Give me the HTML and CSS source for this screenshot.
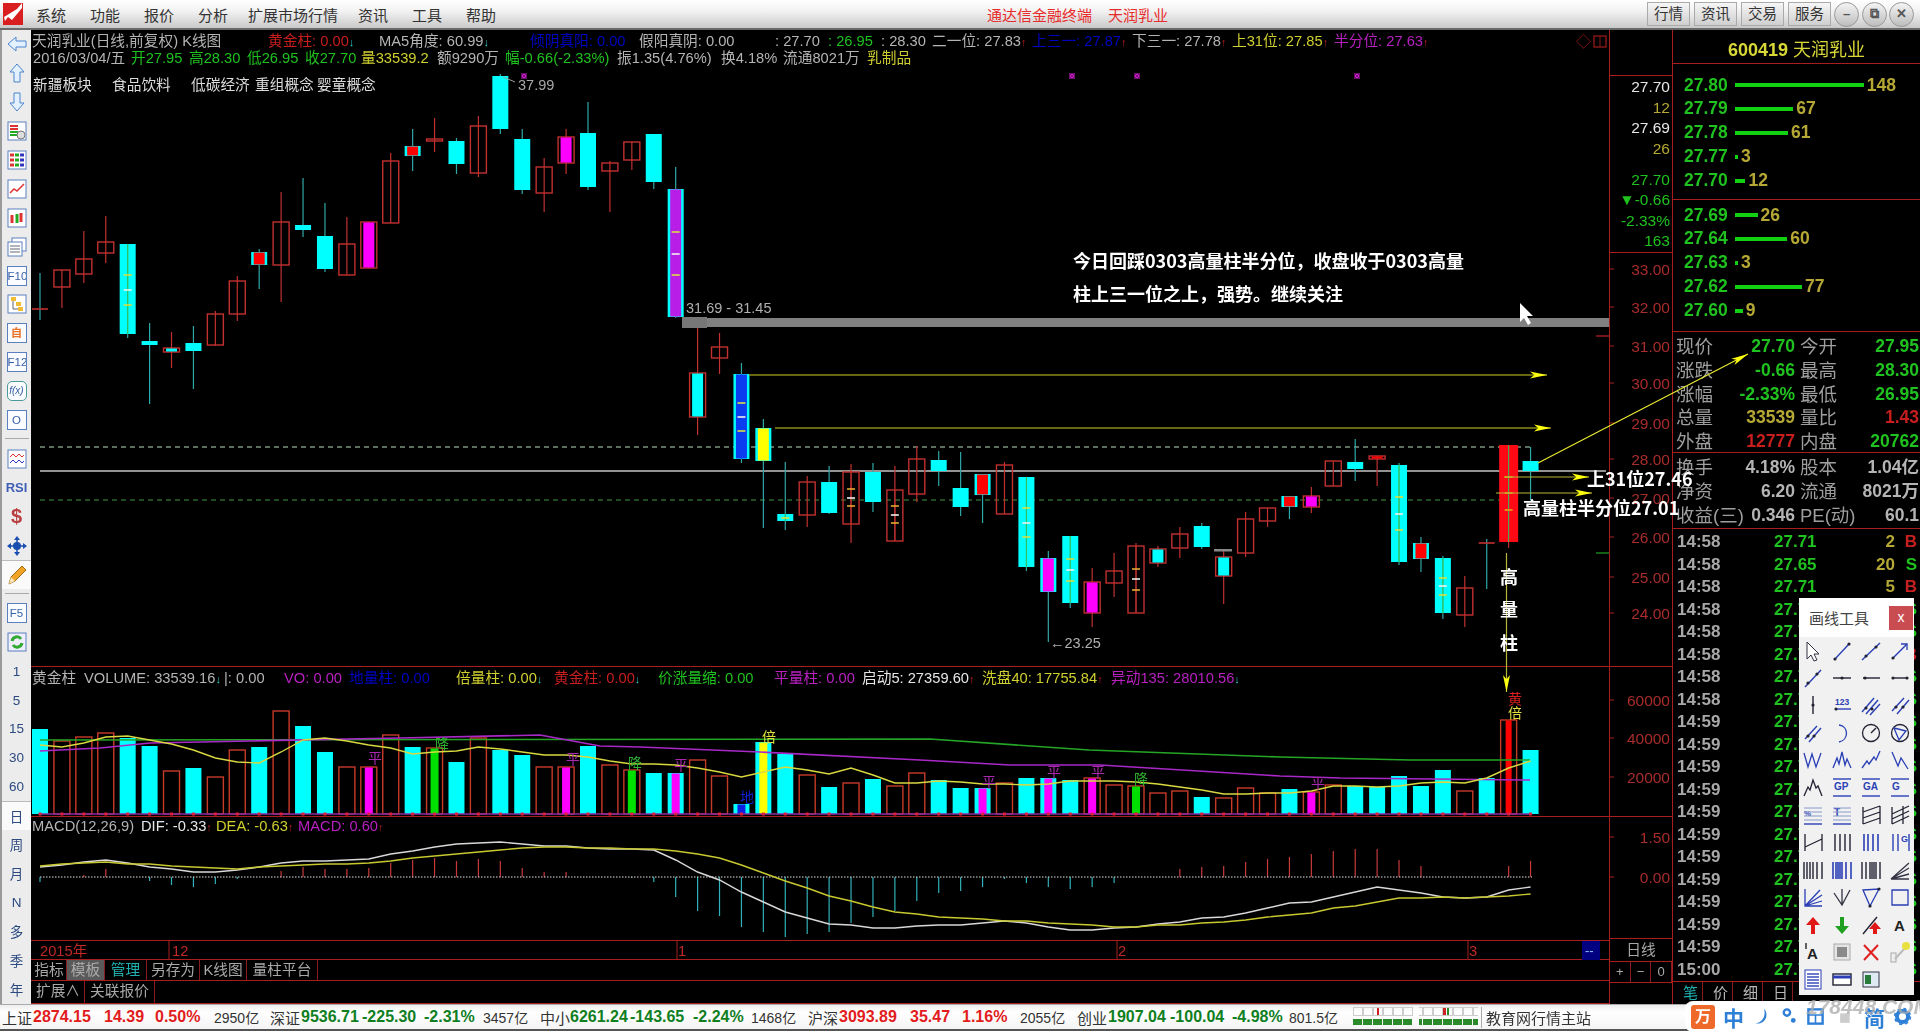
FILE: index.html
```html
<!DOCTYPE html>
<html lang="zh-CN">
<head>
  <meta charset="UTF-8">
  <title>通达信金融终端 天润乳业</title>
  <link rel="stylesheet" href="styles.css">
</head>
<body>

  <!-- 标题栏 -->
  <header class="titlebar">
    <svg class="logo" viewBox="0 0 20 22"><rect width="20" height="22" fill="#d81e1e"/><path d="M1 14 L14 6 L19 0 L19 5 L9 17 L5 14 L2 18 Z" fill="#fff"/></svg>
    <nav class="menu">
      <span>系统</span><span>功能</span><span>报价</span><span>分析</span><span class="menu-wide">扩展市场行情</span><span>资讯</span><span>工具</span><span>帮助</span>
    </nav>
    <div class="app-title"><span>通达信金融终端</span><span>天润乳业</span></div>
    <div class="title-btns"><span>行情</span><span>资讯</span><span>交易</span><span>服务</span></div>
    <div class="win-btns">
      <span class="win-btn">&#8211;</span>
      <span class="win-btn">&#10697;</span>
      <span class="win-btn win-close">&#10005;</span>
    </div>
  </header>

  <main class="main">
    <!-- 左侧工具条 -->
    <aside class="toolbar">
      <div class="tool"><svg viewBox="0 0 20 20"><path d="M1 10 L9 3 V7 H19 V13 H9 V17 Z" fill="#e2f0ff" stroke="#4b85cc"/></svg></div>
      <div class="tool"><svg viewBox="0 0 20 20"><path d="M10 1 L17 9 H13 V19 H7 V9 H3 Z" fill="#e2f0ff" stroke="#4b85cc"/></svg></div>
      <div class="tool"><svg viewBox="0 0 20 20"><path d="M10 19 L17 11 H13 V1 H7 V11 H3 Z" fill="#e2f0ff" stroke="#4b85cc"/></svg></div>
      <div class="tool"><svg viewBox="0 0 20 20"><rect x="1" y="1" width="18" height="18" fill="#fff" stroke="#5b80c0"/><path d="M3 5 H11 M3 8 H11" stroke="#d33" stroke-width="2"/><path d="M3 11 H11 M3 14 H11" stroke="#2a2" stroke-width="2"/><circle cx="14" cy="14" r="4" fill="#ddd" stroke="#777"/></svg></div>
      <div class="tool"><svg viewBox="0 0 20 20"><rect x="1" y="1" width="18" height="18" fill="#fff" stroke="#5b80c0"/><path d="M3 5 H7 M3 10 H7 M3 15 H7" stroke="#d33" stroke-width="3"/><path d="M8 5 H12 M8 10 H12 M8 15 H12" stroke="#2a2" stroke-width="3"/><path d="M13 5 H17 M13 10 H17 M13 15 H17" stroke="#33b" stroke-width="3"/></svg></div>
      <div class="tool"><svg viewBox="0 0 20 20"><rect x="1" y="1" width="18" height="18" fill="#fff" stroke="#5b80c0"/><path d="M3 14 L7 10 L10 12 L17 5" fill="none" stroke="#d33" stroke-width="1.5"/></svg></div>
      <div class="tool"><svg viewBox="0 0 20 20"><rect x="1" y="1" width="18" height="18" fill="#fff" stroke="#5b80c0"/><path d="M5 7 V15 M14 5 V14" stroke="#d33" stroke-width="3"/><path d="M10 6 V15" stroke="#2a2" stroke-width="3"/></svg></div>
      <div class="tool"><svg viewBox="0 0 20 20"><rect x="5" y="1" width="14" height="13" fill="#fff" stroke="#5b80c0"/><rect x="1" y="5" width="14" height="14" fill="#fff" stroke="#5b80c0"/><path d="M3 9 H13 M3 12 H13 M3 15 H13" stroke="#667"/></svg></div>
      <div class="tool"><span class="tool-box">F10</span></div>
      <div class="tool"><svg viewBox="0 0 20 20"><rect x="1" y="1" width="18" height="18" fill="#fff" stroke="#5b80c0"/><rect x="4" y="3" width="5" height="4" fill="#eb3"/><rect x="9" y="8" width="5" height="4" fill="#eb3"/><rect x="11" y="13" width="5" height="4" fill="#eb3"/><path d="M6 7 V15 H11" fill="none" stroke="#667"/></svg></div>
      <div class="tool"><span class="tool-box tool-orange">自</span></div>
      <div class="tool"><span class="tool-box">F12</span></div>
      <div class="tool"><span class="tool-box tool-round">f(x)</span></div>
      <div class="tool"><span class="tool-box">O</span></div>
      <div class="tool-sep"></div>
      <div class="tool"><svg viewBox="0 0 20 20"><rect x="1" y="1" width="18" height="18" fill="#fff" stroke="#5b80c0"/><path d="M3 8 L6 5 L9 8 L12 5 L15 8 L17 6" fill="none" stroke="#d33"/><path d="M3 14 L6 11 L9 14 L12 11 L15 14 L17 12" fill="none" stroke="#33b"/></svg></div>
      <div class="tool"><span class="tool-rsi">RSI</span></div>
      <div class="tool"><span class="tool-dollar">$</span></div>
      <div class="tool"><svg viewBox="0 0 20 20"><path d="M10 0 L13 4 H7 Z M10 20 L7 16 H13 Z M0 10 L4 7 V13 Z M20 10 L16 13 V7 Z" fill="#1a4fb0"/><circle cx="10" cy="10" r="4" fill="#1a4fb0"/><path d="M10 4 V16 M4 10 H16" stroke="#1a4fb0" stroke-width="1.5"/></svg></div>
      <div class="tool tool-on"><svg viewBox="0 0 20 20"><path d="M2 19 L4 12 L15 1 L19 5 L8 16 Z" fill="#efa426" stroke="#a06a10"/><path d="M2 19 L4 12 L8 16 Z" fill="#f8e2b8"/></svg></div>
      <div class="tool-sep"></div>
      <div class="tool"><span class="tool-box">F5</span></div>
      <div class="tool"><svg viewBox="0 0 20 20"><rect x="1" y="1" width="18" height="18" fill="#eef" stroke="#5b80c0"/><path d="M5 9 A5 5 0 0 1 14 7 M15 11 A5 5 0 0 1 6 13" fill="none" stroke="#3a3" stroke-width="3"/></svg></div>
      <div class="tool tool-num">1</div>
      <div class="tool tool-num">5</div>
      <div class="tool tool-num">15</div>
      <div class="tool tool-num">30</div>
      <div class="tool tool-num">60</div>
      <div class="tool tool-num tool-on">日</div>
      <div class="tool tool-num">周</div>
      <div class="tool tool-num">月</div>
      <div class="tool tool-num">N</div>
      <div class="tool tool-num">多</div>
      <div class="tool tool-num">季</div>
      <div class="tool tool-num">年</div>
    </aside>

    <!-- 图表区 -->
    <section class="charts">
      <div class="pane pane-k">
        <div class="info-row row-a">
          <span class="c-gray">天润乳业(日线,前复权) K线图</span>
          <span class="c-red">黄金柱: 0.00<b class="c-cyan">↓</b></span>
          <span class="c-gray">MA5角度: 60.99<b class="c-cyan">↓</b></span>
          <span class="c-blue">倾阴真阳: 0.00</span>
          <span class="c-gray">假阳真阴: 0.00</span>
          <span class="c-gray">: 27.70</span>
          <span class="c-green">: 26.95</span>
          <span class="c-gray">: 28.30</span>
          <span class="c-gray">二一位: 27.83<b class="c-red">↑</b></span>
          <span class="c-blue">上三一: 27.87<b class="c-red">↑</b></span>
          <span class="c-gray">下三一: 27.78<b class="c-red">↑</b></span>
          <span class="c-yellow">上31位: 27.85<b class="c-red">↑</b></span>
          <span class="c-purple">半分位: 27.63<b class="c-red">↑</b></span>
        </div>
        <div class="info-row row-b">
          <span class="c-gray">2016/03/04/五</span>
          <span class="c-green">开27.95</span>
          <span class="c-green">高28.30</span>
          <span class="c-green">低26.95</span>
          <span class="c-green">收27.70</span>
          <span class="c-yellow">量33539.2</span>
          <span class="c-gray">额9290万</span>
          <span class="c-green">幅-0.66(-2.33%)</span>
          <span class="c-gray">振1.35(4.76%)</span>
          <span class="c-gray">换4.18%</span>
          <span class="c-gray">流通8021万</span>
          <span class="c-yellow">乳制品</span>
        </div>
        <div class="info-row row-c">
          <span>新疆板块</span><span>食品饮料</span><span>低碳经济</span><span>重组概念</span><span>婴童概念</span>
        </div>
      </div>

      <div class="pane pane-vol">
        <div class="info-row row-vol">
          <span class="c-gray">黄金柱</span>
          <span class="c-gray">VOLUME: 33539.16<b class="c-cyan">↓</b></span>
          <span class="c-gray">|: 0.00</span>
          <span class="c-purple">VO: 0.00</span>
          <span class="c-blue">地量柱: 0.00</span>
          <span class="c-yellow">倍量柱: 0.00<b class="c-cyan">↓</b></span>
          <span class="c-red">黄金柱: 0.00<b class="c-cyan">↓</b></span>
          <span class="c-green">价涨量缩: 0.00</span>
          <span class="c-purple">平量柱: 0.00</span>
          <span class="c-white">启动5: 27359.60<b class="c-red">↑</b></span>
          <span class="c-yellow">洗盘40: 17755.84<b class="c-red">↑</b></span>
          <span class="c-purple">异动135: 28010.56<b class="c-cyan">↓</b></span>
        </div>
      </div>

      <div class="pane pane-macd">
        <div class="info-row row-macd">
          <span class="c-gray">MACD(12,26,9)</span>
          <span class="c-white">DIF: -0.33<b class="c-red">↑</b></span>
          <span class="c-yellow">DEA: -0.63<b class="c-red">↑</b></span>
          <span class="c-purple">MACD: 0.60<b class="c-red">↑</b></span>
        </div>
      </div>

      <div class="pane pane-time"></div>

      <div class="pane tab-row">
        <span class="tab">指标</span><span class="tab tab-on">模板</span><span class="tab c-cyan-dim">管理</span><span class="tab">另存为</span><span class="tab">K线图</span><span class="tab">量柱平台</span>
      </div>
      <div class="tab-row tab-row-low">
        <span class="tab">扩展∧</span><span class="tab">关联报价</span>
      </div>
    </section>

    <!-- 坐标轴 -->
    <section class="axis">
      <div class="axis-top"></div>
      <div class="axis-quote">
        <span class="c-white">27.70</span><span class="c-olive">12</span>
        <span class="c-white">27.69</span><span class="c-olive">26</span>
        <span class="c-green q-gap">27.70</span><span class="c-green">▼-0.66</span>
        <span class="c-green">-2.33%</span><span class="c-green">163</span>
      </div>
      <div class="axis-price"></div>
      <div class="axis-vol"></div>
      <div class="axis-macd"></div>
      <div class="axis-period">日线</div>
      <div class="axis-zoom"><span>+</span><span>−</span><span>0</span></div>
    </section>

    <!-- 右侧盘口 -->
    <section class="panel">
      <h2 class="stock-name"><b>600419</b> 天润乳业</h2>
      <div class="book book-sell" id="bookSell"></div>
      <div class="book book-buy" id="bookBuy"></div>
      <div class="stats">
        <span>现价</span><span class="v c-green">27.70</span><span>今开</span><span class="v c-green">27.95</span>
        <span>涨跌</span><span class="v c-green">-0.66</span><span>最高</span><span class="v c-green">28.30</span>
        <span>涨幅</span><span class="v c-green">-2.33%</span><span>最低</span><span class="v c-green">26.95</span>
        <span>总量</span><span class="v c-olive">33539</span><span>量比</span><span class="v c-red">1.43</span>
        <span>外盘</span><span class="v c-red">12777</span><span>内盘</span><span class="v c-green">20762</span>
      </div>
      <div class="stats stats-low">
        <span>换手</span><span class="v">4.18%</span><span>股本</span><span class="v">1.04亿</span>
        <span>净资</span><span class="v">6.20</span><span>流通</span><span class="v">8021万</span>
        <span>收益(三)</span><span class="v">0.346</span><span>PE(动)</span><span class="v">60.1</span>
      </div>
      <div class="ticks" id="ticks"></div>
      <div class="panel-tabs"><span class="c-cyan-dim">笔</span><span>价</span><span>细</span><span>日</span></div>
    </section>

    <!-- K线、量柱、MACD、标注 -->
    <svg class="plot" id="plot" viewBox="0 30 1920 974"></svg>

    <!-- 画线工具 -->
    <div class="palette">
      <div class="palette-head"><span>画线工具</span><span class="palette-close">x</span></div>
      <div class="palette-grid" id="paletteGrid"></div>
    </div>
  </main>

  <!-- 状态栏 -->
  <footer class="status">
    <span class="idx idx-a"><em>上证</em><b class="c-hot">2874.15</b><b class="c-hot">14.39</b><b class="c-hot">0.50%</b><i>2950亿</i></span>
    <span class="idx idx-b"><em>深证</em><b class="c-dn">9536.71</b><b class="c-dn">-225.30</b><b class="c-dn">-2.31%</b><i>3457亿</i></span>
    <span class="idx idx-c"><em>中小</em><b class="c-dn">6261.24</b><b class="c-dn">-143.65</b><b class="c-dn">-2.24%</b><i>1468亿</i></span>
    <span class="idx idx-d"><em>沪深</em><b class="c-hot">3093.89</b><b class="c-hot">35.47</b><b class="c-hot">1.16%</b><i>2055亿</i></span>
    <span class="idx idx-e"><em>创业</em><b class="c-dn">1907.04</b><b class="c-dn">-100.04</b><b class="c-dn">-4.98%</b><i>801.5亿</i></span>
    <svg class="meter" viewBox="0 0 125 20">
      <defs>
        <pattern id="seg" width="10" height="20" patternUnits="userSpaceOnUse">
          <rect x=".5" y=".5" width="9" height="8" fill="none" stroke="#ccc"/>
          <rect x="0" y="12" width="9" height="6" fill="#2a8a2a"/>
        </pattern>
      </defs>
      <rect width="60" height="20" fill="url(#seg)"/>
      <rect x="66" width="60" height="20" fill="url(#seg)"/>
      <rect x="24" y="1" width="2" height="7" fill="#c22"/>
      <rect x="90" y="1" width="3" height="7" fill="#c22"/>
      <rect x="94" y="1" width="2" height="7" fill="#2a8a2a"/>
    </svg>
    <span class="server">教育网行情主站</span>
    <div class="ime">
      <span class="ime-logo">万</span>
      <span class="ime-zh">中</span>
      <svg viewBox="0 0 24 24"><path d="M15 2 A11 11 0 0 1 3 20 A11 13 0 0 0 15 2 Z" fill="#2e7fd6"/></svg>
      <svg viewBox="0 0 24 24"><circle cx="10" cy="7" r="4" fill="none" stroke="#2e7fd6" stroke-width="3"/><circle cx="18" cy="17" r="3" fill="#2e7fd6"/></svg>
      <svg viewBox="0 0 24 24"><rect x="3" y="3" width="18" height="18" fill="none" stroke="#2e7fd6" stroke-width="3"/><path d="M3 10 H21 M12 10 V21" stroke="#2e7fd6" stroke-width="2"/></svg>
      <svg class="ime-gray" viewBox="0 0 24 24"><rect x="4" y="8" width="12" height="12" fill="#ccc"/></svg>
      <span class="ime-zh">简</span>
      <svg viewBox="0 0 24 24"><circle cx="12" cy="12" r="7" fill="none" stroke="#2e7fd6" stroke-width="5"/><circle cx="12" cy="12" r="10" fill="none" stroke="#2e7fd6" stroke-width="2" stroke-dasharray="4 4"/></svg>
      <span class="watermark">178448.COM</span>
    </div>
  </footer>

  <script src="chart.js"></script>
</body>
</html>
```

FILE: styles.css
```css
* {
  box-sizing: border-box;
}

body {
  margin: 0;
  width: 1920px;
  height: 1031px;
  overflow: hidden;
  background-color: #000;
  font-family: "Liberation Sans", "Noto Sans CJK SC", sans-serif;
  color: #b8b8b8;
  filter: blur(0.35px);
}

/* 标题栏 */
.titlebar {
  height: 30px;
  display: flex;
  align-items: center;
  background: linear-gradient(#fff, #f2f2f2 40%, #c9c9c9);
  border-bottom: 2px solid #6a6a6a;
  font-size: 15px;
  color: #333;
}

.logo {
  width: 20px;
  height: 22px;
  margin-left: 3px;
  flex: none;
}

.menu {
  display: flex;
  gap: 24px;
  margin-left: 13px;
  width: 951px;
}

.menu-wide {
  margin: 0 -4px;
}

.app-title {
  display: flex;
  gap: 16px;
  color: #e82c2c;
  width: 660px;
}

.title-btns {
  display: flex;
  gap: 4px;
}

.title-btns span {
  width: 43px;
  height: 24px;
  line-height: 22px;
  text-align: center;
  background: linear-gradient(#f6f6f6, #cfcfcf);
  border: 1px solid #aaa;
  font-size: 14.5px;
}

.win-btns {
  display: flex;
  gap: 2.5px;
  margin-left: 3px;
}

.win-btn {
  width: 25px;
  height: 25px;
  border-radius: 50%;
  border: 1px solid #999;
  background: linear-gradient(#f4f4f4, #bdbdbd);
  text-align: center;
  line-height: 22px;
  font-size: 13px;
  font-weight: bold;
  color: #555;
}

/* 主体 */
.main {
  position: relative;
  height: 974px;
  display: flex;
}

.plot {
  position: absolute;
  top: 0;
  left: 0;
  width: 1920px;
  height: 974px;
  pointer-events: none;
}

.plot text {
  font-family: "Liberation Sans", "Noto Sans CJK SC", sans-serif;
  dominant-baseline: central;
}

.plot text.note {
  font-family: "Noto Sans CJK SC", sans-serif;
  font-weight: bold;
}

/* 左侧工具条 */
.toolbar {
  width: 31px;
  flex: none;
  background-color: #ececec;
  border-left: 2px solid #9a9a9a;
  display: flex;
  flex-direction: column;
  align-items: center;
}

.tool {
  width: 29px;
  height: 28.9px;
  flex: none;
  display: flex;
  align-items: center;
  justify-content: center;
}

.tool svg {
  width: 20px;
  height: 20px;
}

.tool-on {
  background-color: #fafafa;
  border-top: 1px solid #bbb;
}

.tool-sep {
  width: 24px;
  height: 10px;
  flex: none;
  background: linear-gradient(transparent 4px, #aaa 4px, #aaa 5px, transparent 5px);
}

.tool-box {
  width: 20px;
  height: 20px;
  border: 1px solid #5b80c0;
  background-color: #fbfcff;
  font-size: 11.5px;
  line-height: 18px;
  text-align: center;
  color: #3a62a8;
  white-space: nowrap;
  overflow: hidden;
}

.tool-orange {
  color: #e8722a;
  font-weight: bold;
}

.tool-round {
  border-radius: 5px;
  border-color: #4b9a9a;
  font-style: italic;
  font-size: 10px;
}

.tool-rsi {
  font-weight: bold;
  font-size: 13px;
  color: #3f5fb5;
}

.tool-dollar {
  font-weight: bold;
  font-size: 20px;
  color: #b84040;
}

.tool-num {
  font-size: 13.5px;
  color: #2c4a80;
}

/* 图表区 */
.charts {
  width: 1578px;
  flex: none;
  display: flex;
  flex-direction: column;
}

.pane {
  border-bottom: 1px solid #a81e1e;
}

.pane-k {
  height: 637px;
  padding-top: 3px;
}

.pane-vol {
  height: 150px;
  padding-top: 3px;
}

.pane-macd {
  height: 124px;
  padding-top: 1px;
}

.pane-time {
  height: 19px;
}

.info-row {
  display: grid;
  height: 17px;
  line-height: 17px;
  font-size: 14.7px;
  white-space: nowrap;
}

.info-row b {
  font-size: 11px;
  font-weight: bold;
}

.row-a {
  margin-left: 1px;
  grid-template-columns: 236px 111px 151px 109px 136px 53px 53px 51px 100px 100px 100px 102px auto;
}

.row-b {
  margin-left: 2px;
  grid-template-columns: 98px 58px 58px 58px 56px 76px 68px 112px 104px 62px 84px auto;
}

.row-c {
  margin: 10px 0 0 2px;
  grid-template-columns: 79px 79px 64px 62px auto;
  color: #ddd;
}

.row-vol {
  margin-left: 1px;
  grid-template-columns: 52px 140px 60px 65px 107px 98px 104px 116px 88px 120px 129px auto;
}

.row-macd {
  margin-left: 1px;
  grid-template-columns: 109px 75px 82px auto;
}

.c-gray { color: #b4b4b4; }
.c-white { color: #e6e6e6; }
.c-red { color: #c81e1e; }
.c-green { color: #1fc21f; }
.c-blue { color: #0000c4; }
.c-yellow { color: #cfcf30; }
.c-olive { color: #b5a835; }
.c-purple { color: #b820c0; }
.c-cyan { color: #30c8c8; }
.c-cyan-dim { color: #20b0b0; }

.tab-row {
  height: 21px;
  display: grid;
  grid-template-columns: 35px 38px 42px 53px 47px 71px;
  font-size: 14.7px;
  line-height: 20px;
  color: #a8a8a8;
  padding-left: 1px;
}

.tab-row-low {
  height: 23px;
  grid-template-columns: 53px 70px;
  border-bottom: 1px solid #a81e1e;
}

.tab {
  text-align: center;
  border-right: 1px solid #8c1c1c;
  white-space: nowrap;
}

.tab-on {
  background-color: #5a5a5a;
  color: #aaa;
}

/* 坐标轴 */
.axis {
  width: 64px;
  flex: none;
  border-left: 1px solid #a81e1e;
  border-right: 1px solid #a81e1e;
  display: flex;
  flex-direction: column;
}

.axis-top {
  height: 46px;
  border-bottom: 1px solid #a81e1e;
}

.axis-quote {
  height: 177px;
  border-bottom: 1px solid #a81e1e;
  display: flex;
  flex-direction: column;
  align-items: flex-end;
  padding: 1px 2px 0 0;
  font-size: 15.5px;
  line-height: 20.5px;
}

.q-gap {
  margin-top: 10.5px;
}

.axis-price {
  height: 414px;
  border-bottom: 1px solid #a81e1e;
}

.axis-vol {
  height: 150px;
  border-bottom: 1px solid #a81e1e;
}

.axis-macd {
  height: 122px;
  border-bottom: 1px solid #a81e1e;
}

.axis-period {
  height: 21px;
  margin-top: 2px;
  text-align: center;
  font-size: 14.7px;
  line-height: 19px;
  color: #a8a8a8;
  border-bottom: 1px solid #a81e1e;
}

.axis-zoom {
  height: 21px;
  display: flex;
  border-bottom: 1px solid #a81e1e;
  font-size: 13px;
  line-height: 20px;
  color: #aaa;
  text-align: center;
}

.axis-zoom span {
  flex: 1;
  border-right: 1px solid #8c1c1c;
}

/* 右侧盘口 */
.panel {
  width: 247px;
  flex: none;
  display: flex;
  flex-direction: column;
  font-size: 17.5px;
}

.stock-name {
  height: 34px;
  margin: 0;
  padding: 7px 0 0 0;
  border-bottom: 1px solid #a81e1e;
  text-align: center;
  font-size: 18px;
  font-weight: normal;
  line-height: 27px;
  color: #d8d838;
}

.book {
  display: flex;
  flex-direction: column;
  height: 136px;
  padding: 9.5px 0 0 11px;
  border-bottom: 1px solid #a81e1e;
}

.book-buy {
  height: 132px;
  padding-top: 3.5px;
}

.book-row {
  height: 23.8px;
  display: flex;
  align-items: center;
  gap: 3px;
  line-height: 23.8px;
  font-weight: bold;
  font-size: 17.5px;
}

.book-price {
  width: 48px;
  color: #1fc21f;
}

.book-bar {
  height: 4px;
  background-color: #12d012;
}

.book-vol {
  color: #b5a835;
}

.stats {
  display: grid;
  grid-template-columns: 60px 59px 5px 55px 64px;
  grid-auto-rows: 23.8px;
  height: 121px;
  padding: 3px 0 0 3px;
  line-height: 23.8px;
  border-bottom: 1px solid #a81e1e;
  font-size: 18.5px;
  color: #9e9e9e;
  white-space: nowrap;
}

.stats span:nth-child(4n+3) {
  grid-column: 4;
}

.stats .v {
  text-align: right;
  font-size: 17.5px;
  font-weight: bold;
}

.stats-low {
  height: 76px;
}

.stats-low .v {
  color: #b4b4b4;
}

.ticks {
  height: 453px;
  padding-top: 2px;
  border-bottom: 1px solid #a81e1e;
}

.tick-row {
  height: 22.5px;
  display: grid;
  grid-template-columns: 97px 80px 41px 22px;
  padding-left: 4px;
  line-height: 22.5px;
  font-size: 17px;
  font-weight: bold;
}

.tick-time {
  color: #a8a8a8;
}

.tick-price {
  color: #1fc21f;
}

.tick-vol {
  color: #b5a835;
  text-align: right;
}

.tick-side {
  text-align: right;
  color: #c82020;
}

.tick-side.sell {
  color: #1fc21f;
}

.panel-tabs {
  display: flex;
  height: 22px;
  font-size: 15px;
  line-height: 22px;
}

.panel-tabs span {
  width: 30px;
  padding-left: 10px;
  border-right: 1px solid #8c1c1c;
}

/* 画线工具 */
.palette {
  position: absolute;
  left: 1799px;
  top: 568px;
  width: 115px;
  height: 397px;
  background-color: #f1f1f1;
  z-index: 5;
}

.palette-head {
  height: 39px;
  display: flex;
  align-items: center;
  justify-content: space-between;
  padding: 0 1px 0 10px;
  background-color: #fff;
  font-size: 15px;
  color: #444;
}

.palette-close {
  width: 24px;
  height: 24px;
  line-height: 22px;
  text-align: center;
  background-color: #c94d50;
  color: #fff;
  font-size: 14px;
}

.palette-grid {
  display: grid;
  grid-template-columns: repeat(4, 28.8px);
  grid-auto-rows: 27.4px;
}

.palette-grid svg {
  width: 22px;
  height: 22px;
  justify-self: center;
  align-self: center;
}

.palette-grid svg text {
  font-family: "Liberation Sans", sans-serif;
  font-weight: bold;
  fill: #2a3fb5;
}

/* 状态栏 */
.status {
  height: 27px;
  display: flex;
  align-items: center;
  background: linear-gradient(#eee, #fff 30%, #f4f4f4);
  border-top: 1px solid #aaa;
  border-bottom: 2px solid #555;
  color: #333;
  font-size: 15.5px;
  white-space: nowrap;
  position: relative;
  padding-left: 2px;
}

.idx {
  display: grid;
  align-items: center;
}

.idx-a { grid-template-columns: 31px 71px 51px 59px 56px; }
.idx-b { grid-template-columns: 31px 61px 62px 59px 57px; }
.idx-c { grid-template-columns: 30px 60px 63px 58px 57px; }
.idx-d { grid-template-columns: 31px 71px 52px 58px 57px; }
.idx-e { grid-template-columns: 31px 62px 62px 57px 58px; }

.idx em {
  font-style: normal;
  font-size: 15px;
}

.idx b {
  font-size: 16px;
}

.idx i {
  font-style: normal;
  font-size: 14px;
}

.c-hot { color: #e21c1c; }
.c-dn { color: #0f7f1f; }

.meter {
  width: 125px;
  height: 20px;
  padding: 0;
  margin-left: 6px;
  flex: none;
}

.server {
  margin-left: 3px;
  padding-left: 4px;
  border-left: 1px solid #aaa;
  font-size: 15px;
}

.ime {
  position: absolute;
  right: 0;
  top: -4px;
  width: 235px;
  height: 31px;
  display: flex;
  align-items: center;
  gap: 8px;
  padding-left: 6px;
  background-color: #fff;
  border-radius: 8px 0 0 8px;
}

.ime svg {
  width: 19px;
  height: 19px;
  flex: none;
}

.ime .ime-gray {
  margin-left: 4px;
}

.ime-logo {
  width: 24px;
  height: 24px;
  line-height: 24px;
  text-align: center;
  border-radius: 3px;
  background-color: #ef6a2a;
  color: #fff;
  font-weight: bold;
  font-size: 16px;
}

.ime-zh {
  color: #2e7fd6;
  font-weight: bold;
  font-size: 21px;
}

.watermark {
  position: absolute;
  left: 121px;
  top: -6px;
  font-size: 21px;
  font-weight: bold;
  font-style: italic;
  color: rgba(170, 170, 170, 0.75);
}
```

FILE: chart.js
```js
const DX = 21.92;
const xOf = i => 40 + DX * i;

const RED = '#c23030', CYAN = '#00ffff', WICK = '#2fa8a8';

// 高, 实体上, 实体下, 低, 类型(r红空心/c青实心), 内芯颜色, 十字标记
const candles = [
  [273, 309, 310, 320, 'd'],
  [270, 270, 287, 308, 'r'],
  [231, 259, 274, 283, 'r'],
  [216, 242, 253, 263, 'r'],
  [244, 244, 334, 338, 'c', null, [275, 290, 305]],
  [323, 341, 345, 404, 'c'],
  [332, 348, 352, 368, 'r', CYAN],
  [326, 343, 351, 389, 'c'],
  [311, 314, 345, 346, 'r'],
  [276, 281, 314, 321, 'r'],
  [249, 252, 265, 289, 'c', '#ff0000'],
  [192, 222, 265, 302, 'r'],
  [178, 225, 230, 237, 'c'],
  [203, 236, 269, 272, 'c'],
  [217, 244, 275, 275, 'r'],
  [222, 222, 268, 268, 'r', '#ff00ff'],
  [153, 161, 223, 223, 'r'],
  [129, 146, 156, 171, 'c', '#ff0000'],
  [118, 139, 141, 152, 'r'],
  [138, 141, 164, 174, 'c'],
  [116, 126, 173, 177, 'r'],
  [74, 76, 129, 134, 'c'],
  [129, 139, 190, 194, 'c'],
  [158, 167, 193, 212, 'r'],
  [129, 137, 163, 174, 'r', '#ff00ff'],
  [102, 133, 187, 190, 'c'],
  [161, 163, 171, 212, 'r'],
  [142, 142, 160, 170, 'r'],
  [134, 134, 182, 189, 'c'],
  [167, 189, 317, 318, 'c', '#b81ee8', [232, 254, 275]],
  [328, 373, 417, 435, 'r', CYAN],
  [333, 347, 358, 374, 'r'],
  [363, 374, 459, 463, 'c', '#0a3cf0', [403, 417, 431]],
  [419, 428, 461, 528, 'c', '#ffff00'],
  [462, 514, 521, 530, 'c', null, [518]],
  [476, 482, 515, 527, 'r'],
  [466, 482, 513, 514, 'c'],
  [464, 472, 524, 543, 'r', null, [489, 498, 506]],
  [463, 472, 502, 512, 'c'],
  [466, 490, 541, 541, 'r', null, [506, 515, 523]],
  [446, 459, 494, 502, 'r'],
  [451, 460, 471, 486, 'c'],
  [452, 488, 507, 516, 'c'],
  [474, 474, 495, 523, 'c', '#ff0000'],
  [462, 465, 514, 514, 'r'],
  [477, 477, 567, 571, 'c', null, [508, 523, 537]],
  [551, 558, 592, 642, 'c', '#ff00ff'],
  [536, 536, 603, 608, 'c', null, [559, 570, 581]],
  [568, 582, 613, 627, 'r', '#ff00ff'],
  [553, 571, 583, 597, 'r'],
  [543, 546, 613, 613, 'r', null, [569, 579, 590]],
  [546, 549, 563, 567, 'r', CYAN],
  [527, 534, 548, 558, 'r'],
  [523, 526, 547, 549, 'c'],
  [550, 557, 576, 604, 'r', CYAN],
  [512, 519, 553, 557, 'r'],
  [508, 508, 521, 527, 'r'],
  [496, 496, 507, 519, 'c', '#ff0000'],
  [487, 496, 507, 513, 'r', '#ff00ff'],
  [461, 461, 486, 486, 'r'],
  [439, 462, 469, 481, 'c'],
  [456, 456, 459, 486, 'r', '#ff0000'],
  [463, 465, 562, 565, 'c', null, [497, 514, 530]],
  [537, 543, 559, 572, 'c', '#ff0000'],
  [556, 558, 613, 619, 'c', null, [578, 586, 595]],
  [576, 588, 615, 627, 'r'],
  [539, 543, 544, 589, 'd'],
  [445, 445, 542, 548, 's', null, [477, 493, 510]],
  [447, 461, 471, 500, 'c'],
];

// 成交量: 柱顶, 类型, 内芯颜色
const bars = [
  [729, 'c'], [741, 'r'], [737, 'r'], [733, 'r'], [738, 'c'], [746, 'c'], [771, 'r'], [768, 'c'], [777, 'r'],
  [750, 'r'], [747, 'c'], [711, 'r'], [726, 'c'], [752, 'c'], [767, 'r'], [767, 'r', '#ff00ff'], [735, 'r'],
  [747, 'c'], [748, 'r', '#00e000'], [762, 'c'], [738, 'r'], [750, 'c'], [755, 'c'], [767, 'r'],
  [767, 'r', '#ff00ff'], [746, 'c'], [765, 'r'], [770, 'r', '#00e000'], [773, 'c'], [773, 'c', '#ff00ff'],
  [760, 'r'], [776, 'r'], [804, 'c', '#1020e0'], [742, 'c', '#ffff00'], [754, 'c'], [775, 'r'], [787, 'c'],
  [783, 'r'], [779, 'c'], [786, 'r'], [773, 'r'], [780, 'c'], [788, 'c'], [788, 'c', '#ff00ff'], [783, 'r'],
  [778, 'c'], [778, 'c', '#ff00ff'], [780, 'c'], [778, 'r', '#ff00ff'], [785, 'r'], [786, 'r', '#00e000'],
  [793, 'r'], [791, 'r'], [797, 'c'], [798, 'r'], [788, 'r'], [793, 'r'], [789, 'c'], [792, 'r', '#ff00ff'],
  [785, 'r'], [786, 'c'], [787, 'c'], [776, 'c'], [786, 'c'], [770, 'c'], [791, 'r'], [778, 'c'],
  [720, 'r', '#ff0000'], [750, 'c'],
];

const volMa = [745, 747, 743, 737, 736, 740, 744, 750, 758, 762, 763, 752, 740, 738, 741, 745, 748, 754, 752, 751, 747, 749, 752, 755, 755, 757, 761, 764, 764, 765, 768, 772, 777, 772, 767, 770, 774, 768, 775, 783, 783, 781, 782, 784, 784, 785, 784, 781, 781, 781, 782, 784, 787, 790, 794, 794, 793, 793, 791, 786, 786, 787, 786, 783, 782, 783, 778, 768, 761];

const dif = [867, 865, 862, 860, 863, 867, 869, 872, 872, 870, 867, 863, 861, 861, 860, 859, 854, 851, 847, 844, 843, 842, 844, 846, 846, 848, 849, 849, 850, 860, 872, 880, 892, 902, 912, 918, 924, 925, 928, 928, 926, 925, 925, 923, 921, 923, 927, 930, 930, 928, 927, 924, 922, 918, 917, 913, 908, 903, 902, 897, 892, 887, 890, 893, 897, 898, 897, 890, 887];

const dea = [866, 864, 863, 862, 864, 864, 866, 867, 868, 869, 867, 866, 865, 864, 864, 863, 861, 858, 856, 854, 852, 850, 848, 847, 847, 848, 848, 849, 849, 851, 854, 858, 865, 873, 881, 888, 896, 901, 907, 912, 914, 917, 918, 919, 921, 921, 923, 924, 925, 927, 927, 925, 925, 923, 922, 920, 917, 915, 913, 908, 906, 902, 898, 898, 897, 898, 897, 896, 894];

// MACD 柱 (877 为零轴)
const hist = [882, 877, 875, 869, 877, 881, 885, 887, 884, 879, 877, 871, 867, 869, 869, 868, 863, 860, 858, 861, 859, 861, 868, 872, 872, 877, 877, 878, 882, 897, 911, 916, 927, 932, 937, 934, 932, 923, 917, 911, 901, 893, 891, 887, 879, 883, 887, 889, 887, 883, 877, 877, 869, 867, 866, 862, 859, 857, 854, 851, 849, 849, 860, 866, 877, 877, 877, 866, 861];

let out = '';
const line = (x1, y1, x2, y2, c, w = 1, extra = '') => {
  out += `<line x1="${x1}" y1="${y1}" x2="${x2}" y2="${y2}" stroke="${c}" stroke-width="${w}" ${extra}/>`;
};
const rect = (x, y, w, h, fill, stroke) => {
  out += `<rect x="${x}" y="${y}" width="${w}" height="${h}" fill="${fill}"${stroke ? ` stroke="${stroke}" stroke-width="1.4"` : ''}/>`;
};
const text = (x, y, s, c, size, extra = '') => {
  out += `<text x="${x}" y="${y}" fill="${c}" font-size="${size}" ${extra}>${s}</text>`;
};
const poly = (pts, c, w = 1.2) => {
  out += `<polyline points="${pts.join(' ')}" fill="none" stroke="${c}" stroke-width="${w}"/>`;
};
const byIndex = arr => arr.map((y, i) => `${xOf(i).toFixed(1)},${y}`);
const arrow = (x1, y1, x2, y2, len = 17) => {
  const a = Math.atan2(y2 - y1, x2 - x1);
  const bx = x2 - len * Math.cos(a), by = y2 - len * Math.sin(a);
  const nx = -Math.sin(a) * 3.5, ny = Math.cos(a) * 3.5;
  const mx = x2 - len * 0.75 * Math.cos(a), my = y2 - len * 0.75 * Math.sin(a);
  out += `<path d="M${x2} ${y2} L${bx + nx} ${by + ny} L${mx} ${my} L${bx - nx} ${by - ny} Z" fill="#ffff10"/>`;
};

// 水平参考线
line(40, 447, 1530, 447, '#b9e0c0', 1.2, 'stroke-dasharray="5 4"');
line(40, 471, 1606, 471, '#c4c4c4', 1.6);
line(40, 500, 1500, 500, '#3f9a3f', 1.2, 'stroke-dasharray="5 4"');

// K线
candles.forEach((c, i) => {
  const [high, top, bottom, low, kind, core, ticks] = c;
  const x = xOf(i);
  const wickColor = kind === 'r' || kind === 's' ? RED : WICK;
  line(x, high, x, low, wickColor, 1.2);
  if (kind === 'd') {
    line(x - 8, top, x + 8, top, '#c23030', 1.6);
    return;
  }
  if (kind === 's') {
    rect(x - 9.5, top, 19, bottom - top, '#ff0a14');
  } else if (kind === 'c') {
    rect(x - 8, top, 16, bottom - top, CYAN);
    if (!core && ticks) line(x, top, x, bottom, '#30c060', 1);
  } else {
    rect(x - 8, top, 16, bottom - top, 'none', RED);
  }
  if (core) rect(x - 5.5, top + 0.5, 11, bottom - top - 1, core);
  if (ticks) {
    line(x, top, x, bottom, kind === 'r' ? RED : (core || '#30c060'), 1);
    ticks.forEach((y, n) => {
      const col = kind === 's' ? '#e8a020' : (n === 1 ? '#f0f0f0' : (kind === 'r' ? '#e8a830' : '#d8e040'));
      line(x - 4, y, x + 4, y, col, 1.6);
    });
  }
});

// 缺口灰条
rect(682, 318, 927, 9, '#808080');
rect(682, 317, 25, 11, '#777');
rect(1214, 549, 18, 2.5, '#888');
text(686, 308, '31.69 - 31.45', '#b0b0b0', 14.5);
text(518, 85, '37.99', '#a8a8a8', 14.5);
poly(['503,77', '508,79', '515,82'], '#9a9a9a', 1);
text(1050, 643, '←23.25', '#b0b0b0', 14.5);
[524, 1072, 1137, 1357].forEach(x => {
  rect(x - 2.5, 73.5, 5, 5, '#d020d0');
  line(x - 3, 73, x + 3, 79, '#7a107a', 1);
  line(x + 3, 73, x - 3, 79, '#7a107a', 1);
});

// 标注文字
const note = 'class="note"';
text(1073, 260, '今日回踩0303高量柱半分位，收盘收于0303高量', '#fff', 18, note);
text(1073, 293, '柱上三一位之上，强势。继续关注', '#fff', 18, note);

// 成交量
bars.forEach((b, i) => {
  const [top, kind, core] = b;
  const x = xOf(i);
  if (kind === 'c') rect(x - 8, top, 16, 814 - top, CYAN);
  else rect(x - 8, top, 16, 814 - top, 'none', '#c83a28');
  if (core) {
    const w = core === '#ff0000' ? 6 : 8;
    rect(x - w / 2, top + 0.5, w, 813.5 - top, core);
  }
});
poly(['40,740', '930,739', '1089,750', '1280,757', '1410,760', '1530,760'], '#25a525', 1.6);
poly(['40,751', '100,748', '150,743', '250,741', '400,738', '540,735', '600,746', '640,747', '760,752', '920,760', '1010,765', '1100,765', '1280,776', '1340,778', '1530,780'], '#a828c8', 1.6);
poly(byIndex(volMa), '#d8d840', 1.4);
line(40, 814, 1532, 814, '#8a2aa0', 1.6);
bars.forEach((b, i) => rect(xOf(i) - 1.5, 812.5, 3, 3, '#e02040'));
[[375, 758, '平', '#a828b0'], [442, 744, '降', '#30b030'], [573, 759, '平', '#a828b0'], [635, 763, '降', '#30b030'], [681, 765, '平', '#a828b0'], [747, 797, '地', '#1020d0'], [769, 737, '倍', '#e0e040'], [989, 782, '平', '#a828b0'], [1054, 772, '平', '#a828b0'], [1098, 772, '平', '#a828b0'], [1141, 779, '降', '#30b030'], [1318, 783, '平', '#a828b0'], [1515, 699, '黄', '#d82020'], [1515, 713, '倍', '#e0e040']].forEach(m => {
  text(m[0], m[1], m[2], m[3], 14, 'text-anchor="middle"');
});

// MACD
hist.forEach((y, i) => {
  if (y !== 877) line(xOf(i), 877, xOf(i), y, y < 877 ? '#c83a3a' : '#30b0b8', 1.2);
});
line(40, 877, 1532, 877, '#e0e0e0', 1, 'stroke-dasharray="1.5 1.5"');
poly(byIndex(dif), '#d8d8d8', 1.4);
poly(byIndex(dea), '#c8c830', 1.4);

// 时间轴
[[169, 941], [677, 941], [1117, 941], [1468, 941]].forEach(p => line(p[0], p[1], p[0], 960, '#a81e1e'));
text(40, 951, '2015年', '#c02828', 14.7);
text(172, 951, '12', '#c02828', 14.7);
text(678, 951, '1', '#c02828', 14.7);
text(1118, 951, '2', '#c02828', 14.7);
text(1469, 951, '3', '#c02828', 14.7);
rect(1582, 941, 18, 19, '#000080');
text(1585, 950, '--', '#8ac8f0', 13);

// 价格坐标
const axisLabel = (y, s, tick) => {
  text(1670, y, s, '#a82c2c', 15.5, 'text-anchor="end"');
  if (tick) line(1609, y, 1614, y, '#a81e1e');
};
[[269, '33.00'], [307, '32.00'], [346, '31.00'], [383, '30.00'], [423, '29.00'], [459, '28.00'], [498, '27.00'], [537, '26.00'], [577, '25.00'], [613, '24.00'], [700, '60000'], [738, '40000'], [777, '20000'], [837, '1.50'], [877, '0.00']].forEach(a => axisLabel(a[0], a[1], true));
line(1596, 336, 1609, 336, '#a81e1e', 1.4);
line(1596, 553, 1609, 553, '#1a8a1a', 1.4);
text(1576, 41, '◇', '#8a1818', 15);
rect(1594, 36, 12, 11, 'none', '#8a1818');
line(1600, 36, 1600, 47, '#8a1818');

// 画线标注
line(749, 375, 1547, 375, '#8a8a18', 1.4);
line(775, 428, 1551, 428, '#8a8a18', 1.4);
arrow(749, 375, 1547, 375);
arrow(775, 428, 1551, 428);
line(1504, 477, 1589, 477, '#b8b838', 1.2);
line(1496, 493, 1592, 493, '#b8b838', 1.2);
arrow(1504, 477, 1589, 477);
arrow(1496, 493, 1592, 493);
line(1538, 463, 1748, 354, '#e8e830', 1.2);
arrow(1538, 463, 1748, 354);
line(1506.5, 553, 1506.5, 692, '#b8b838', 1.2);
arrow(1506.5, 553, 1506.5, 692);
text(1587, 478, '上31位27.46', '#fff', 18, note);
text(1523, 507, '高量柱半分位27.01', '#fff', 18, note);
['高', '量', '柱'].forEach((s, n) => text(1509, [576, 608, 642][n], s, '#fff', 18, `${note} text-anchor="middle"`));

// 鼠标指针
out += '<path d="M1520 303 V322 L1524 318 L1528 325 L1531 323 L1527 316 L1533 316 Z" fill="#fff"/>';

document.getElementById('plot').innerHTML = out;

// 买卖盘
const bookRow = (p, v) => `<div class="book-row"><span class="book-price">${p}</span><span class="book-bar" style="width:${Math.max(3, v * 0.87)}px"></span><span class="book-vol">${v}</span></div>`;
document.getElementById('bookSell').innerHTML = [['27.80', 148], ['27.79', 67], ['27.78', 61], ['27.77', 3], ['27.70', 12]].map(r => bookRow(r[0], r[1])).join('');
document.getElementById('bookBuy').innerHTML = [['27.69', 26], ['27.64', 60], ['27.63', 3], ['27.62', 77], ['27.60', 9]].map(r => bookRow(r[0], r[1])).join('');

// 分笔成交
const tickData = [
  ['14:58', '27.71', 2, 'B'], ['14:58', '27.65', 20, 'S'], ['14:58', '27.71', 5, 'B'], ['14:58', '27.70', 1, 'S'],
  ['14:58', '27.70', 1, 'S'], ['14:58', '27.71', 1, 'B'], ['14:58', '27.70', 3, 'S'], ['14:58', '27.70', 2, 'S'],
  ['14:59', '27.70', 1, 'S'], ['14:59', '27.70', 1, 'S'], ['14:59', '27.70', 4, 'S'], ['14:59', '27.70', 2, 'S'],
  ['14:59', '27.70', 1, 'S'], ['14:59', '27.70', 1, 'S'], ['14:59', '27.70', 3, 'S'], ['14:59', '27.70', 2, 'S'],
  ['14:59', '27.70', 1, 'S'], ['14:59', '27.70', 1, 'S'], ['14:59', '27.70', 2, 'S'], ['15:00', '27.70', 6, 'S'],
];
document.getElementById('ticks').innerHTML = tickData.map(t => `<div class="tick-row"><span class="tick-time">${t[0]}</span><span class="tick-price">${t[1]}</span><span class="tick-vol">${t[2]}</span><span class="tick-side${t[3] === 'S' ? ' sell' : ''}">${t[3]}</span></div>`).join('');

// 画线工具图标
const B = '#2a3fb5';
const seg = (x1, y1, x2, y2, c = B, w = 1.4) => `<line x1="${x1}" y1="${y1}" x2="${x2}" y2="${y2}" stroke="${c}" stroke-width="${w}"/>`;
const dot = (x, y) => `<circle cx="${x}" cy="${y}" r="1.6" fill="#223"/>`;
const txt = (x, y, s, size = 9) => `<text x="${x}" y="${y}" font-size="${size}">${s}</text>`;
const pl = (d, c = B) => `<path d="${d}" fill="none" stroke="${c}" stroke-width="1.3"/>`;
const verticals = (xs, w = 1.4, c = '#223') => xs.map(x => seg(x, 3, x, 20, c, w)).join('');
const icons = [
  '<path d="M5 2 V19 L9 15 L12 21 L15 20 L12 14 L17 14 Z" fill="#fff" stroke="#334"/>',
  seg(4, 19, 18, 4) + dot(4, 19) + dot(18, 4),
  seg(2, 20, 20, 3) + dot(6, 16) + dot(16, 7),
  seg(4, 18, 18, 4) + pl('M12 4 H18 V10') + dot(4, 18),
  seg(3, 20, 19, 3) + dot(6, 16) + dot(15, 7),
  seg(2, 11, 20, 11, '#223') + dot(11, 11),
  seg(3, 11, 20, 11, '#223') + dot(5, 11),
  seg(3, 11, 19, 11, '#223') + dot(4, 11) + dot(18, 11),
  seg(11, 2, 11, 20, '#223') + dot(11, 11),
  txt(4, 11, '123', 8.5) + seg(4, 15, 20, 15) + dot(5, 15),
  seg(2, 18, 14, 4) + seg(6, 20, 18, 6) + seg(10, 21, 20, 10) + dot(6, 14) + dot(12, 15),
  seg(3, 17, 15, 4) + seg(8, 20, 20, 6) + dot(7, 13) + dot(14, 13),
  seg(3, 17, 15, 4) + seg(7, 20, 19, 6) + dot(6, 14) + dot(12, 14),
  pl('M8 3 C18 4 18 18 8 20'),
  '<circle cx="11" cy="11" r="8.5" fill="none" stroke="#223" stroke-width="1.3"/>' + seg(11, 11, 16, 6, '#223'),
  '<circle cx="11" cy="11" r="8.5" fill="none" stroke="#223" stroke-width="1.3"/>' + pl('M5 6 L17 9 L10 18 Z'),
  pl('M2 4 L6 18 L10 5 L14 18 L19 4'),
  pl('M2 19 L6 9 L8 15 L11 3 L14 16 L16 10 L20 19'),
  pl('M2 19 L7 12 L9 15 L14 8 L16 11 L20 2'),
  pl('M3 3 L9 17 L12 9 L19 20'),
  pl('M2 19 L6 10 L8 13 L11 3 L14 11 L16 9 L20 19', '#223'),
  txt(3, 13, 'GP', 10) + seg(2, 2, 20, 2) + seg(2, 19, 20, 19),
  txt(3, 13, 'GA', 10) + seg(2, 2, 20, 2) + seg(2, 19, 20, 19),
  txt(3, 13, 'G', 10) + seg(2, 2, 20, 2) + seg(2, 19, 20, 19),
  txt(2, 12, '%', 8) + [4, 8, 12, 16].map(y => seg(2, y, 20, y, '#8899cc', 1)).join('') + seg(2, 20, 20, 20),
  txt(3, 12, 'T', 10) + [4, 8, 12, 16].map(y => seg(2, y, 20, y, '#8899cc', 1)).join('') + seg(2, 20, 20, 20),
  pl('M3 3 V20 M3 8 L20 2 M3 14 L20 8 M3 20 L20 14 M20 2 V20', '#223'),
  pl('M3 3 V20 M3 10 L20 2 M3 15 L20 7 M3 20 L20 12 M14 2 V20', '#223'),
  pl('M3 3 V20 M3 16 L20 8 M20 3 V20', '#223'),
  verticals([4, 9, 14, 19]),
  verticals([4, 8, 13, 18], 1.6, B),
  verticals([4, 9], 1.4, B) + txt(12, 11, 'G', 9) + seg(20, 3, 20, 20),
  verticals([2, 5, 8, 11, 15, 20]),
  verticals([2, 5, 7, 9, 11, 15, 20], 1.6, B),
  verticals([2, 6, 10, 12, 14, 16, 20]),
  pl('M2 20 L20 4 M2 20 L20 9 M2 20 L20 15 M2 20 H20', '#334'),
  pl('M3 3 V20 H20 M3 20 L18 4 M3 20 L20 9 M3 20 L20 15', B),
  pl('M3 7 L11 19 L19 4 M11 19 V3', '#334'),
  pl('M3 4 L19 3 L10 20 Z') + dot(19, 3) + dot(10, 20),
  pl('M3 4 H19 V19 H3 Z'),
  '<path d="M11 3 L18 11 H13 V20 H9 V11 H4 Z" fill="#e01818"/>',
  '<path d="M11 20 L18 12 H13 V3 H9 V12 H4 Z" fill="#20a020"/>',
  seg(3, 20, 17, 3, '#223') + '<path d="M15 8 L21 15 H17 V20 H13 V15 H9 Z" fill="#e01818"/>',
  txt(5, 17, 'A', 15).replace('<text', '<text style="fill:#222"'),
  txt(5, 18, 'A', 15).replace('<text', '<text style="fill:#222"') + seg(4, 2, 4, 8, '#222'),
  '<rect x="3" y="3" width="16" height="16" fill="#e4e4e4" stroke="#aaa"/><rect x="6" y="6" width="10" height="10" fill="#8a8a8a"/>',
  seg(4, 4, 18, 19, '#e02020', 2) + seg(18, 4, 4, 19, '#e02020', 2),
  '<rect x="2" y="12" width="5" height="9" fill="#eee" stroke="#aaa"/>' + seg(6, 18, 16, 7, '#bbb', 2) + '<circle cx="17" cy="5" r="4" fill="#e8e040"/>',
  '<rect x="3" y="2" width="16" height="19" fill="#fff" stroke="#2a3fb5"/>' + [6, 9, 12, 15, 18].map(y => seg(5, y, 17, y)).join(''),
  '<rect x="2" y="6" width="18" height="11" fill="#fff" stroke="#223" stroke-width="1.4"/>' + seg(2, 9, 20, 9, B, 3),
  '<rect x="3" y="4" width="16" height="15" fill="#dfe9f3" stroke="#334"/><rect x="5" y="7" width="6" height="9" fill="#2a7a3a"/>',
];
document.getElementById('paletteGrid').innerHTML = icons.map(s => `<svg viewBox="0 0 22 22">${s}</svg>`).join('');
```
